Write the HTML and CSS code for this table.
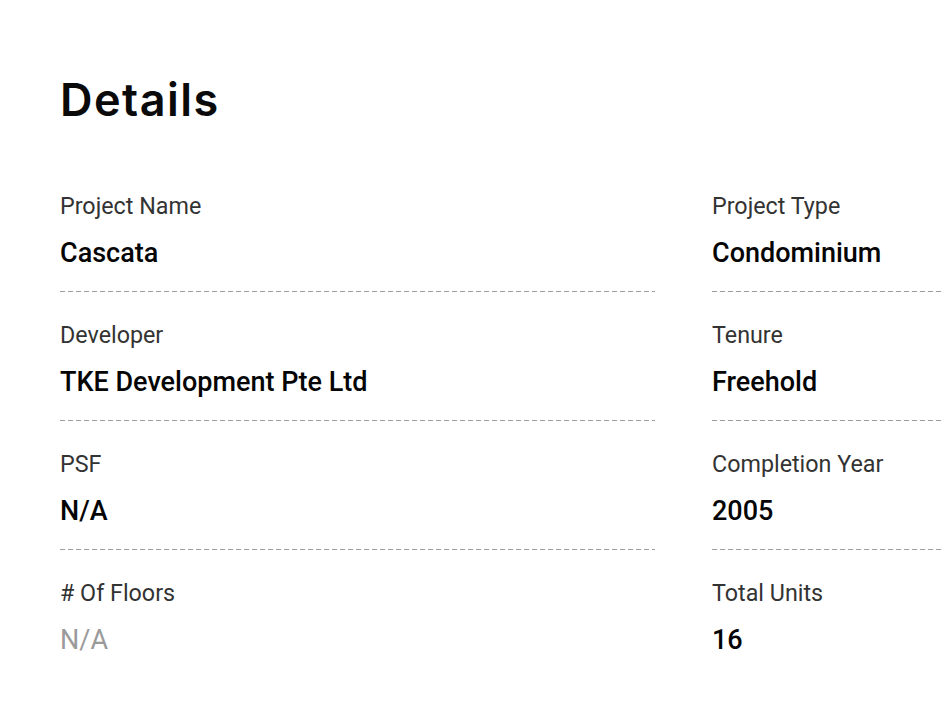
FILE: index.html
```html
<!DOCTYPE html>
<html lang="en">
<head>
<meta charset="utf-8">
<title>Details</title>
<link rel="stylesheet" href="styles.css">
</head>
<body>
<section class="details">
  <h2 class="details-title">Details</h2>
  <div class="details-grid">
    <div class="item">
      <div class="label">Project Name</div>
      <div class="value">Cascata</div>
    </div>
    <div class="item">
      <div class="label">Project Type</div>
      <div class="value">Condominium</div>
    </div>
    <div class="item">
      <div class="label">Developer</div>
      <div class="value">TKE Development Pte Ltd</div>
    </div>
    <div class="item">
      <div class="label">Tenure</div>
      <div class="value">Freehold</div>
    </div>
    <div class="item">
      <div class="label">PSF</div>
      <div class="value">N/A</div>
    </div>
    <div class="item">
      <div class="label">Completion Year</div>
      <div class="value">2005</div>
    </div>
    <div class="item item-last">
      <div class="label"># Of Floors</div>
      <div class="value value-muted">N/A</div>
    </div>
    <div class="item item-last">
      <div class="label">Total Units</div>
      <div class="value">16</div>
    </div>
  </div>
</section>
</body>
</html>
```

FILE: styles.css
```css
html, body {
  margin: 0;
  padding: 0;
  background: #ffffff;
  overflow: hidden;
}

body {
  width: 943px;
  height: 717px;
  font-family: Roboto, "Liberation Sans", Arial, sans-serif;
  color: #111;
}

.details {
  padding: 70px 0 0 60px;
}

.details-title {
  margin: 0;
  font-family: Inter, "Open Sans", sans-serif;
  font-weight: 600;
  font-size: 45px;
  line-height: 60px;
  letter-spacing: 1.5px;
  color: #0a0a0a;
}

.details-grid {
  display: grid;
  grid-template-columns: 595px 595px;
  column-gap: 57px;
  row-gap: 28px;
  margin-top: 61px;
  width: 1247px;
}

.item {
  display: flex;
  flex-direction: column;
  padding-bottom: 21px;
  background-image: linear-gradient(to right, #9e9e9e 0 5px, transparent 5px 8px);
  background-size: 8px 1px;
  background-repeat: repeat-x;
  background-position: left bottom;
}

.item-last {
  background: none;
}

.label {
  font-size: 23.3px;
  line-height: 30px;
  color: #333333;
}

.value {
  margin-top: 14px;
  font-size: 27px;
  line-height: 36px;
  font-weight: 500;
  color: #050505;
}

.value-muted {
  font-weight: 400;
  color: #9a9a9a;
}
```
